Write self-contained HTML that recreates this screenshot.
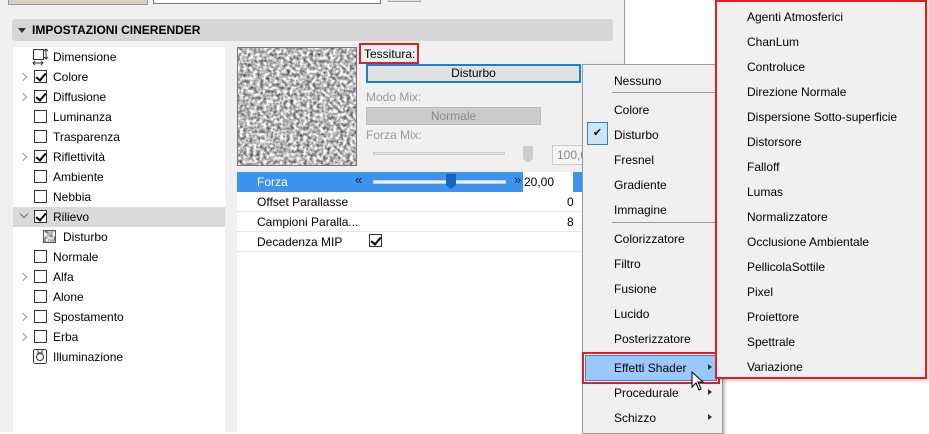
<!DOCTYPE html>
<html><head><meta charset="utf-8"><style>
*{margin:0;padding:0;box-sizing:border-box}
body{width:929px;height:432px;overflow:hidden;background:#fff;font-family:"Liberation Sans",sans-serif;font-size:12px;color:#000;position:relative}
.a{position:absolute}
.t{position:absolute;line-height:14px;white-space:nowrap}
.cb{position:absolute;width:13px;height:13px;border:1px solid #333;background:#fff}
.cb.c::after{content:"";position:absolute;left:3px;top:0px;width:4px;height:8px;border-right:2px solid #000;border-bottom:2px solid #000;transform:rotate(40deg)}
.chev{position:absolute;width:6px;height:6px;border-right:1.5px solid #999;border-top:1.5px solid #999;transform:rotate(45deg)}
</style></head><body>
<svg width="0" height="0" style="position:absolute"><defs><filter id="n" x="0" y="0" width="100%" height="100%" color-interpolation-filters="sRGB"><feTurbulence type="fractalNoise" baseFrequency="0.3" numOctaves="2" seed="3" result="t"/><feColorMatrix in="t" type="matrix" values="1.3 0 0 0 0.08  1.3 0 0 0 0.08  1.3 0 0 0 0.08  0 0 0 0 1"/></filter></defs></svg>
<div class="a" style="left:0;top:0;width:625px;height:432px;background:#f0f0f0;border-right:1px solid #999"></div>
<div class="a" style="left:8px;top:0;width:140px;height:5px;background:#d8d0c4;border:1px solid #999;border-top:none"></div>
<div class="a" style="left:153px;top:0;width:228px;height:4px;background:#fff;border:1px solid #777;border-top:none"></div>
<div class="a" style="left:388px;top:0;width:33px;height:2px;background:#ddd;border:1px solid #aaa;border-top:none"></div>
<div class="a" style="left:12px;top:19px;width:601px;height:22px;background:#d6d6d6;border-radius:3px"></div>
<div class="a" style="left:18px;top:28px;border:4px solid transparent;border-top:5px solid #333"></div>
<div class="t" style="left:32px;top:23px;font-weight:bold;font-size:12px">IMPOSTAZIONI CINERENDER</div>
<div class="a" style="left:13px;top:47px;width:212px;height:385px;background:#fff"></div>
<div class="a" style="left:13px;top:207px;width:212px;height:20px;background:#d9d9d9"></div>
<svg class="a" style="left:31px;top:48px" width="18" height="18" viewBox="0 0 18 18"><rect x="2.5" y="1.5" width="10" height="10" fill="none" stroke="#333"/><path d="M15 1v10M13 3l2-2 2 2M13 9l2 2 2-2M2 15h10M4 13l-2 2 2 2M10 13l2 2-2 2" stroke="#333" fill="none"/></svg>
<div class="t" style="left:53px;top:50px">Dimensione</div>
<div class="chev" style="left:20px;top:74px"></div><div class="cb c" style="left:34px;top:70px"></div><div class="t" style="left:53px;top:70px">Colore</div>
<div class="chev" style="left:20px;top:94px"></div><div class="cb c" style="left:34px;top:90px"></div><div class="t" style="left:53px;top:90px">Diffusione</div>
<div class="cb" style="left:34px;top:110px"></div><div class="t" style="left:53px;top:110px">Luminanza</div>
<div class="cb" style="left:34px;top:130px"></div><div class="t" style="left:53px;top:130px">Trasparenza</div>
<div class="chev" style="left:20px;top:154px"></div><div class="cb c" style="left:34px;top:150px"></div><div class="t" style="left:53px;top:150px">Riflettività</div>
<div class="cb" style="left:34px;top:170px"></div><div class="t" style="left:53px;top:170px">Ambiente</div>
<div class="cb" style="left:34px;top:190px"></div><div class="t" style="left:53px;top:190px">Nebbia</div>
<div class="chev" style="left:21px;top:211px;transform:rotate(135deg);border-color:#666"></div><div class="cb c" style="left:34px;top:210px"></div><div class="t" style="left:53px;top:210px">Rilievo</div>
<svg class="a" style="left:43px;top:230px" width="13" height="13"><rect width="13" height="13" filter="url(#n)"/><rect x=".5" y=".5" width="12" height="12" fill="none" stroke="#555"/></svg><div class="t" style="left:63px;top:230px">Disturbo</div>
<div class="cb" style="left:34px;top:250px"></div><div class="t" style="left:53px;top:250px">Normale</div>
<div class="chev" style="left:20px;top:274px"></div><div class="cb" style="left:34px;top:270px"></div><div class="t" style="left:53px;top:270px">Alfa</div>
<div class="cb" style="left:34px;top:290px"></div><div class="t" style="left:53px;top:290px">Alone</div>
<div class="chev" style="left:20px;top:314px"></div><div class="cb" style="left:34px;top:310px"></div><div class="t" style="left:53px;top:310px">Spostamento</div>
<div class="chev" style="left:20px;top:334px"></div><div class="cb" style="left:34px;top:330px"></div><div class="t" style="left:53px;top:330px">Erba</div>
<svg class="a" style="left:33px;top:348px" width="14" height="16"><rect x=".5" y="1.5" width="13" height="14" rx="2" fill="none" stroke="#333"/><circle cx="7" cy="9" r="3.5" fill="none" stroke="#333"/><path d="M5 2v3h4V2" fill="none" stroke="#333"/></svg><div class="t" style="left:53px;top:350px">Illuminazione</div>

<div class="a" style="left:233px;top:47px;width:357px;height:385px;background:#f0f0f0"></div>
<svg class="a" style="left:237px;top:47px" width="120" height="119"><rect width="120" height="119" filter="url(#n)"/><rect x=".5" y=".5" width="119" height="118" fill="none" stroke="#777"/></svg>
<div class="a" style="left:359px;top:43px;width:60px;height:21px;border:2px solid #e02020"></div>
<div class="t" style="left:364px;top:47px">Tessitura:</div>
<div class="a" style="left:366px;top:64px;width:215px;height:19px;background:#e1e1e1;border:2px solid #1a7fd4;text-align:center;line-height:15px">Disturbo</div>
<div class="t" style="left:366px;top:90px;color:#999">Modo Mix:</div>
<div class="a" style="left:366px;top:107px;width:175px;height:18px;background:#ccc;border:1px solid #bbb;text-align:center;line-height:16px;color:#888">Normale</div>
<div class="t" style="left:366px;top:128px;color:#999">Forza Mix:</div>
<div class="a" style="left:373px;top:152px;width:132px;height:3px;background:#e6e6e6;border:1px solid #ccc"></div>
<div class="a" style="left:523px;top:146px;width:10px;height:17px;background:#ccc;clip-path:polygon(0 0,100% 0,100% 75%,50% 100%,0 75%)"></div>
<div class="a" style="left:552px;top:145px;width:40px;height:20px;background:#f4f4f4;border:1px solid #ccc;color:#888;line-height:18px;padding-left:4px">100,0</div>
<div class="a" style="left:237px;top:172px;width:353px;height:20px;background:#3c93f0"></div>
<div class="t" style="left:257px;top:175px;color:#fff">Forza</div>
<div class="t" style="left:355px;top:173px;color:#123;font-size:13px">«</div>
<div class="a" style="left:373px;top:180px;width:133px;height:4px;background:#eee;border:1px solid #ccc"></div>
<div class="a" style="left:446px;top:174px;width:10px;height:15px;background:#1565c0;clip-path:polygon(0 0,100% 0,100% 75%,50% 100%,0 75%)"></div>
<div class="t" style="left:514px;top:173px;color:#123;font-size:13px">»</div>
<div class="a" style="left:523px;top:172px;width:50px;height:20px;background:#fff;line-height:20px;padding-left:1px">20,00</div>
<div class="a" style="left:237px;top:192px;width:353px;height:240px;background:#fff"></div>
<div class="a" style="left:237px;top:211px;width:353px;height:1px;background:#e6e6e6"></div>
<div class="a" style="left:237px;top:231px;width:353px;height:1px;background:#e6e6e6"></div>
<div class="a" style="left:237px;top:251px;width:353px;height:1px;background:#e6e6e6"></div>
<div class="t" style="left:257px;top:195px">Offset Parallasse</div><div class="t" style="left:567px;top:195px">0</div>
<div class="t" style="left:257px;top:215px">Campioni Paralla...</div><div class="t" style="left:567px;top:215px">8</div>
<div class="t" style="left:257px;top:235px">Decadenza MIP</div><div class="cb c" style="left:369px;top:234px"></div>

<div class="a" style="left:582px;top:64px;width:141px;height:370px;background:#f0f0f0;border:1px solid #999;box-shadow:2px 2px 3px rgba(0,0,0,.25)"></div>
<div class="a" style="left:612px;top:92px;width:106px;height:1px;background:#999"></div>
<div class="a" style="left:612px;top:222px;width:106px;height:1px;background:#999"></div>
<div class="a" style="left:587px;top:122px;width:21px;height:23px;background:#cce4f7;border:1px solid #3c7fb1;text-align:center;line-height:20px;font-size:11px">✔</div>
<div class="a" style="left:582px;top:352px;width:138px;height:32px;border:2px solid #e02020"></div>
<div class="a" style="left:585px;top:355px;width:132px;height:26px;background:#99c9ff;border:1px solid #3c7fd1"></div>
<div class="t" style="left:614px;top:74px">Nessuno</div>
<div class="t" style="left:614px;top:103px">Colore</div>
<div class="t" style="left:614px;top:128px">Disturbo</div>
<div class="t" style="left:614px;top:153px">Fresnel</div>
<div class="t" style="left:614px;top:178px">Gradiente</div>
<div class="t" style="left:614px;top:203px">Immagine</div>
<div class="t" style="left:614px;top:232px">Colorizzatore</div>
<div class="t" style="left:614px;top:257px">Filtro</div>
<div class="t" style="left:614px;top:282px">Fusione</div>
<div class="t" style="left:614px;top:307px">Lucido</div>
<div class="t" style="left:614px;top:332px">Posterizzatore</div>
<div class="t" style="left:614px;top:361px">Effetti Shader</div>
<div class="t" style="left:614px;top:386px">Procedurale</div>
<div class="t" style="left:614px;top:411px">Schizzo</div>
<div class="a" style="left:708px;top:364px;border:3.5px solid transparent;border-left:4px solid #333"></div>
<div class="a" style="left:708px;top:389px;border:3.5px solid transparent;border-left:4px solid #333"></div>
<div class="a" style="left:708px;top:414px;border:3.5px solid transparent;border-left:4px solid #333"></div>
<svg class="a" style="left:691px;top:371px" width="16" height="22" viewBox="0 0 16 22"><path d="M1 1 L1 16 L5 12 L8 19 L10 18 L7 11 L12 11 Z" fill="#fff" stroke="#000" stroke-width="1"/></svg>

<div class="a" style="left:715px;top:0;width:212px;height:379px;background:#f0f0f0;border:2px solid #e02020;box-shadow:2px 2px 3px rgba(0,0,0,.2)"></div>
<div class="t" style="left:747px;top:10px">Agenti Atmosferici</div>
<div class="t" style="left:747px;top:35px">ChanLum</div>
<div class="t" style="left:747px;top:60px">Controluce</div>
<div class="t" style="left:747px;top:85px">Direzione Normale</div>
<div class="t" style="left:747px;top:110px">Dispersione Sotto-superficie</div>
<div class="t" style="left:747px;top:135px">Distorsore</div>
<div class="t" style="left:747px;top:160px">Falloff</div>
<div class="t" style="left:747px;top:185px">Lumas</div>
<div class="t" style="left:747px;top:210px">Normalizzatore</div>
<div class="t" style="left:747px;top:235px">Occlusione Ambientale</div>
<div class="t" style="left:747px;top:260px">PellicolaSottile</div>
<div class="t" style="left:747px;top:285px">Pixel</div>
<div class="t" style="left:747px;top:310px">Proiettore</div>
<div class="t" style="left:747px;top:335px">Spettrale</div>
<div class="t" style="left:747px;top:360px">Variazione</div>
</body></html>
